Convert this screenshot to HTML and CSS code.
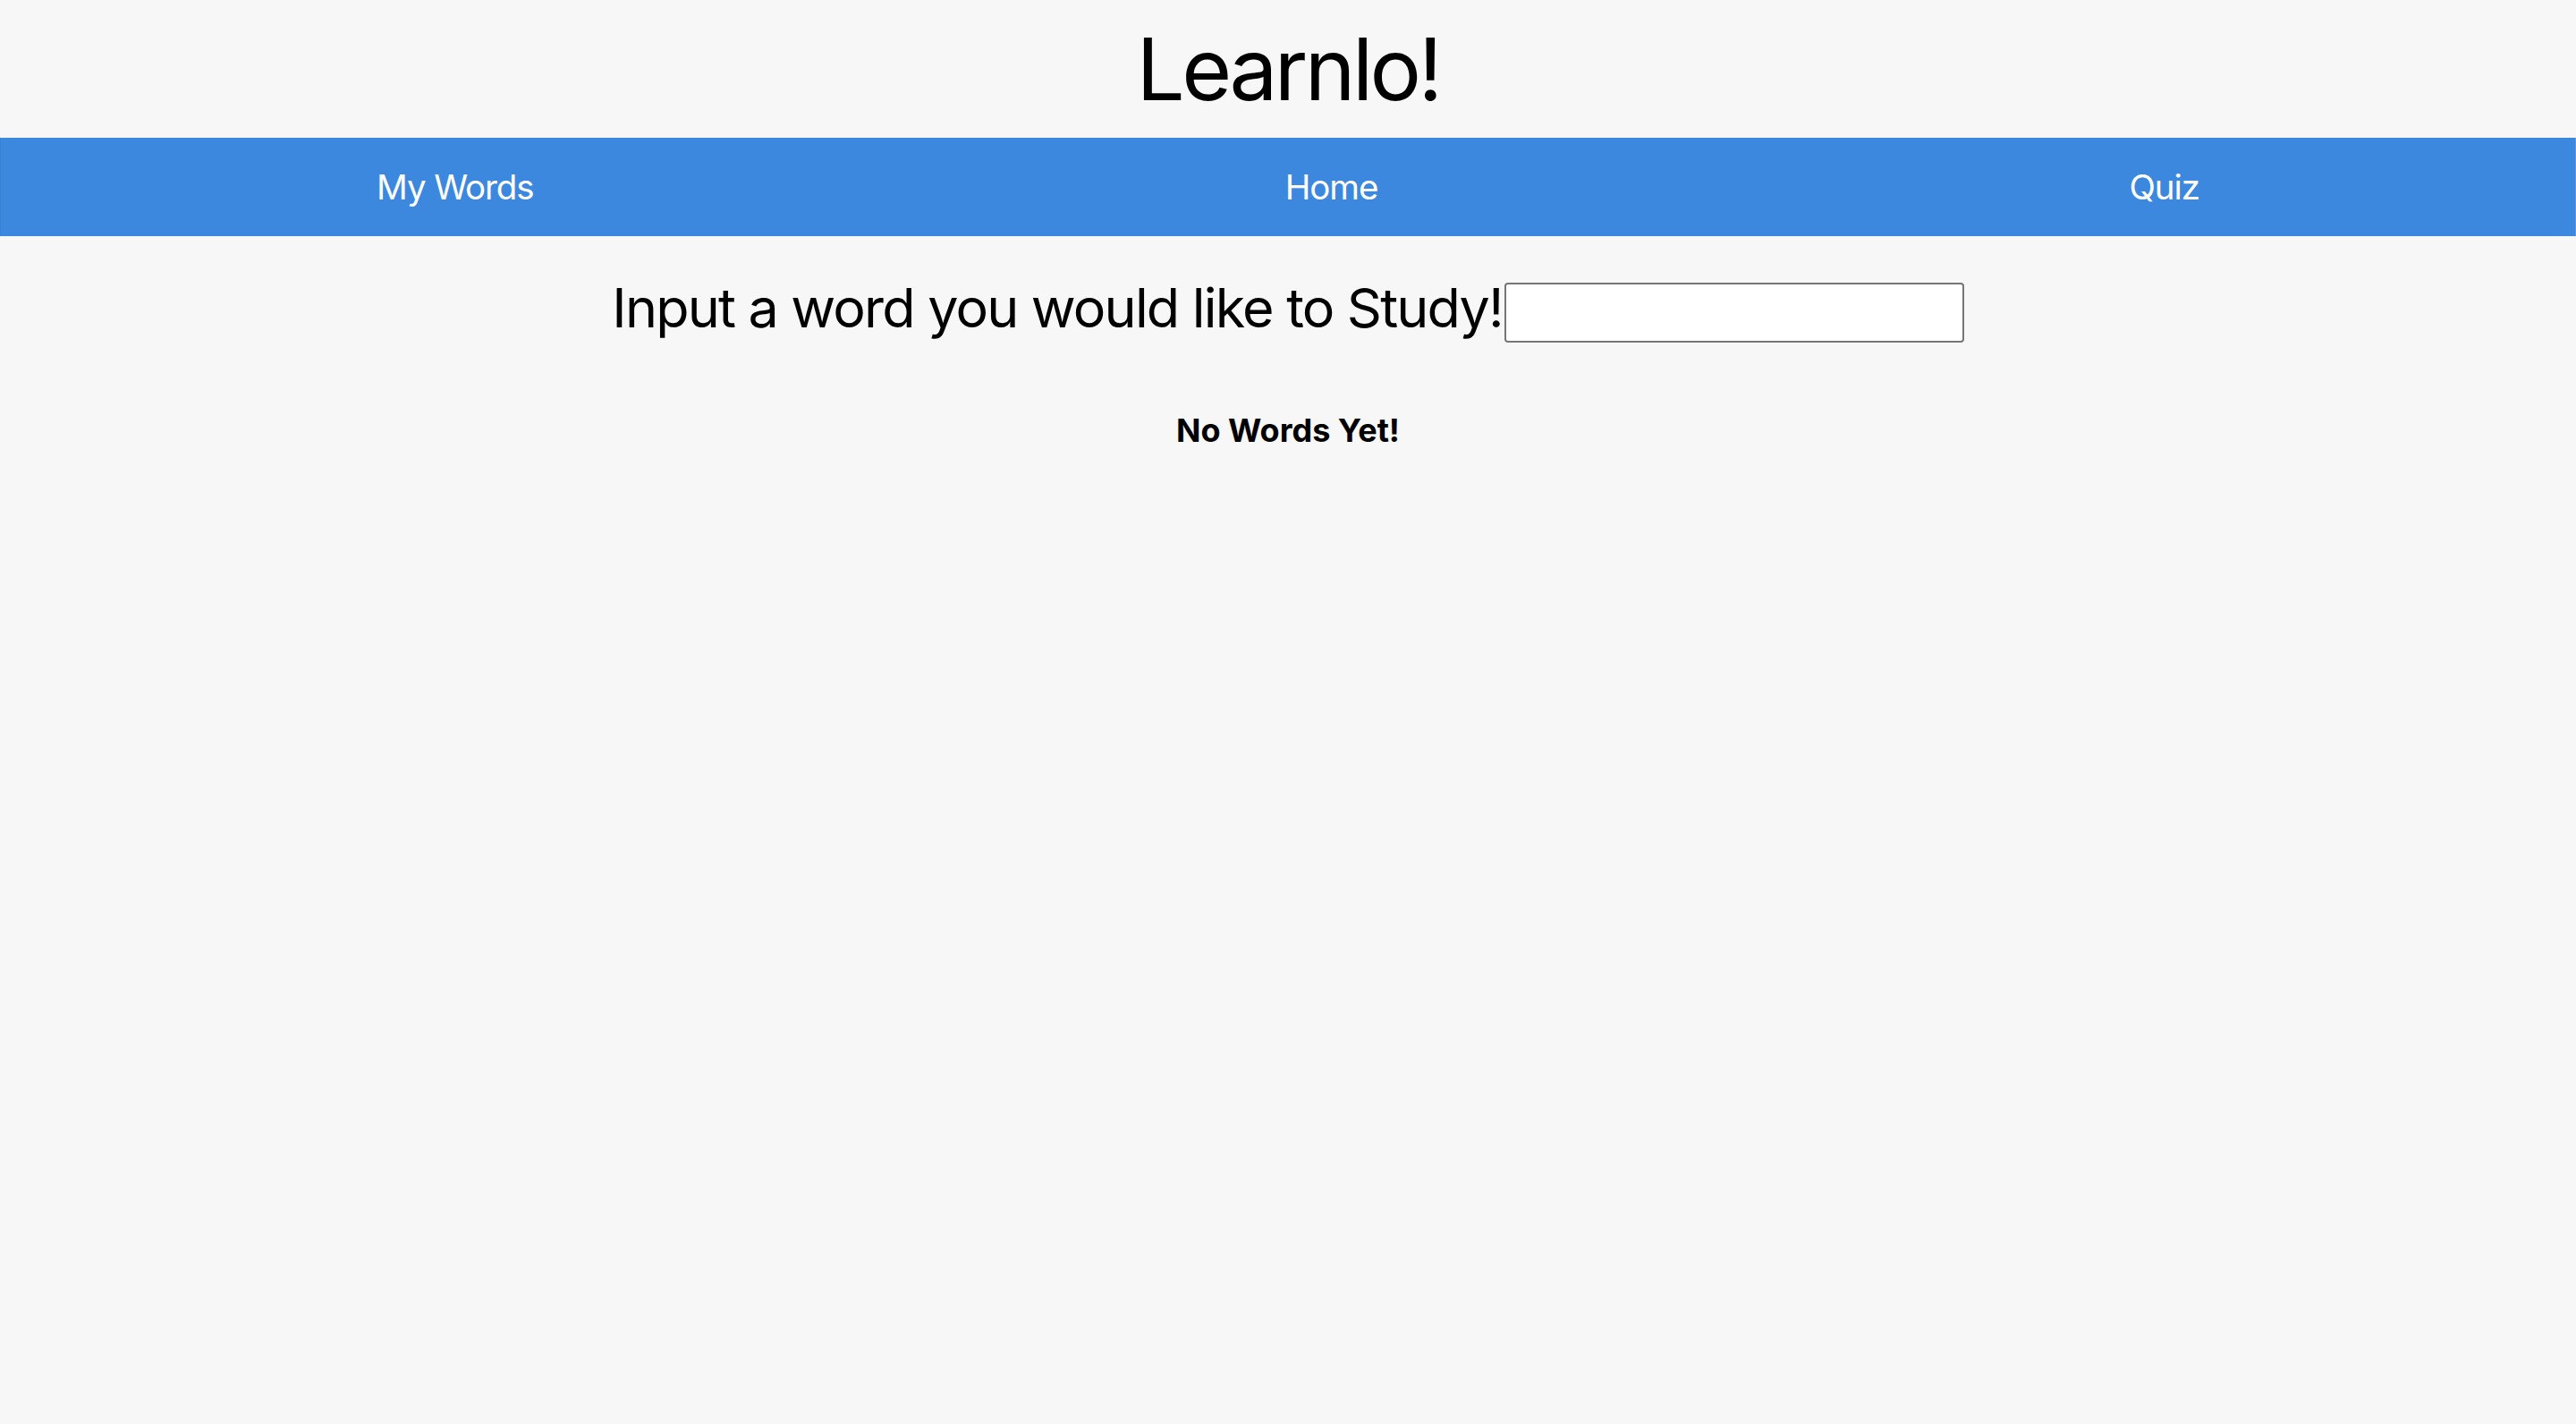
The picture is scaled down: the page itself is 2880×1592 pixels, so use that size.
FILE: index.html
```html
<!DOCTYPE html>
<html lang="en">
<head>
<meta charset="utf-8">
<title>Learnlo!</title>
<link rel="stylesheet" href="styles.css">
</head>
<body>
<header class="site-header">
  <h1 class="title">Learnlo!</h1>
</header>
<nav class="navbar">
  <a class="nav-link" href="#">My Words</a>
  <a class="nav-link" href="#">Home</a>
  <a class="nav-link" href="#">Quiz</a>
</nav>
<main class="content">
  <form class="word-form">
    <label class="word-label" for="word">Input a word you would like to Study!</label>
    <input class="word-input" id="word" type="text">
  </form>
  <h3 class="empty">No Words Yet!</h3>
</main>
</body>
</html>
```

FILE: styles.css
```css
html, body {
  margin: 0;
  padding: 0;
}

body {
  background: #f7f7f7;
  color: #000;
  font-family: Inter, "Noto Sans", "Liberation Sans", sans-serif;
  min-height: 1592px;
}

.site-header {
  padding: 19px 0;
}

.title {
  margin: 0;
  font-size: 96px;
  font-weight: 400;
  line-height: 116px;
  letter-spacing: -3.6px;
  text-align: center;
}

.navbar {
  height: 110px;
  background: #3d88df;
  display: flex;
  justify-content: space-around;
  align-items: center;
  border-left: 1px solid #3a80d6;
  border-right: 1px solid #5b98e0;
  box-sizing: border-box;
}

.nav-link {
  color: #fff;
  text-decoration: none;
  font-size: 38.5px;
  line-height: 1;
  letter-spacing: -1.1px;
}

.content {
  padding-top: 43px;
}

.word-form {
  display: flex;
  justify-content: center;
  align-items: flex-start;
  margin: 0;
}

.word-label {
  font-size: 61px;
  line-height: 74px;
  letter-spacing: -1.8px;
}

.word-input {
  width: 514px;
  height: 67px;
  margin: 9px 0 0 2px;
  box-sizing: border-box;
  border: 2px solid #767676;
  border-radius: 4px;
  background: #fff;
  font-size: 32px;
  padding: 0 8px;
}

.empty {
  margin: 76px 0 0;
  font-size: 36px;
  font-weight: 700;
  line-height: 44px;
  text-align: center;
}
```
